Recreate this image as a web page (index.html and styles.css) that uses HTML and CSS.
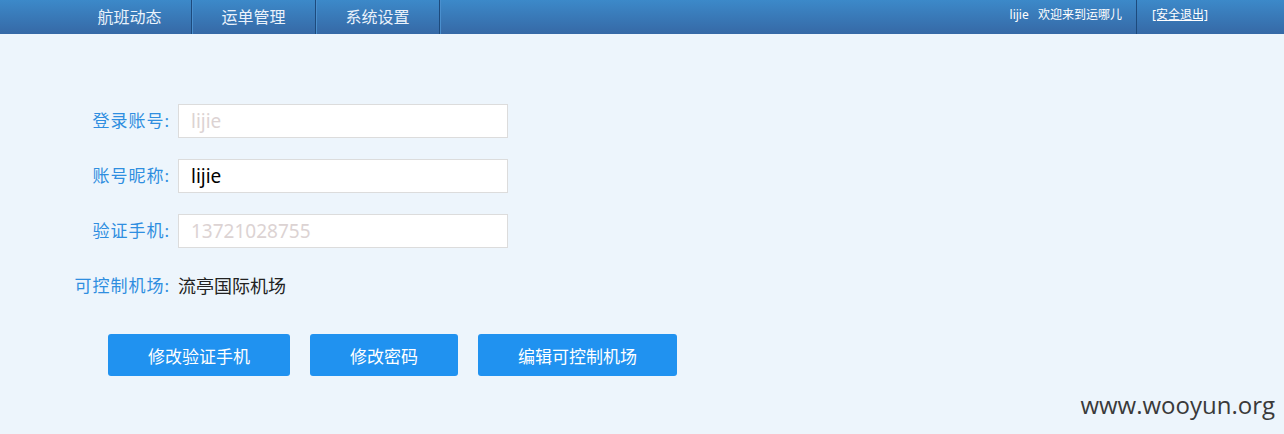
FILE: index.html
```html
<!DOCTYPE html>
<html lang="zh-CN">
<head>
  <meta charset="UTF-8" />
  <title>账号设置</title>
  <link rel="stylesheet" href="styles.css">
</head>

<body>
  <!-- 顶部导航 -->
  <div class="topbar">
    <ul class="nav">
      <li>航班动态</li>
      <li>运单管理</li>
      <li>系统设置</li>
    </ul>
    <div class="user">
      <span class="welcome">lijie&nbsp;&nbsp;&nbsp;欢迎来到运哪儿</span>
      <a class="logout" href="#">[安全退出]</a>
    </div>
  </div>

  <!-- 账号信息 -->
  <div class="content">
    <div class="form">
      <label>登录账号:</label>
      <input type="text" value="lijie" disabled>
      <label>账号昵称:</label>
      <input type="text" value="lijie">
      <label>验证手机:</label>
      <input type="text" value="13721028755" disabled>
      <label>可控制机场:</label>
      <div class="value">流亭国际机场</div>
    </div>

    <div class="actions">
      <button class="btn w1">修改验证手机</button>
      <button class="btn w2">修改密码</button>
      <button class="btn w3">编辑可控制机场</button>
    </div>
  </div>

  <div class="watermark">www.wooyun.org</div>
</body>
</html>
```

FILE: styles.css
```css
body {
  margin: 0;
  background: #edf5fc;
  font-family: "Noto Sans", "Noto Sans CJK SC", sans-serif;
  height: 434px;
  position: relative;
  overflow: hidden;
}

/* 顶部导航 */
.topbar {
  height: 34px;
  background: linear-gradient(#3c89c9, #3669a6);
  display: flex;
  justify-content: space-between;
  color: #fff;
}
.nav {
  display: flex;
  margin: 0;
  padding: 0 0 0 68px;
  list-style: none;
}
.nav li {
  width: 123px;
  line-height: 34px;
  text-align: center;
  font-size: 16px;
  color: #eaf2fb;
  border-right: 1px solid #1d4a7c;
  box-shadow: 1px 0 0 #4a8fce;
}
.user {
  display: flex;
  align-items: stretch;
  font-size: 12px;
  padding-right: 76px;
}
.welcome {
  line-height: 30px;
  padding-right: 14px;
  border-right: 1px solid #1d4a7c;
}
.logout {
  line-height: 30px;
  margin-left: 15px;
  color: #fff;
}

/* 表单 */
.content {
  padding-top: 70px;
}
.form {
  display: grid;
  grid-template-columns: 170px 330px;
  grid-auto-rows: 34px;
  column-gap: 8px;
  row-gap: 21px;
}
.form label {
  font-size: 17px;
  letter-spacing: 1px;
  color: #2f8ee0;
  text-align: right;
  line-height: 34px;
}
.form input {
  box-sizing: border-box;
  height: 34px;
  width: 330px;
  margin: 0;
  padding: 0 12px;
  border: 1px solid #dcdcdc;
  background: #fff;
  font-family: "Noto Sans", "Noto Sans CJK SC", sans-serif;
  font-size: 19px;
  color: #000;
  outline: none;
}
.form input:disabled {
  color: #dcd3d3;
}
.value {
  font-size: 18px;
  line-height: 34px;
  color: #222;
}

.actions {
  display: flex;
  gap: 20px;
  margin: 31px 0 0 108px;
}
.btn {
  height: 42px;
  border: none;
  border-radius: 3px;
  background: #2092f0;
  color: #fff;
  font-family: "Noto Sans", "Noto Sans CJK SC", sans-serif;
  font-size: 17px;
  padding: 0;
}
.w1 { width: 182px; }
.w2 { width: 148px; }
.w3 { width: 199px; }

/* 水印 */
.watermark {
  position: absolute;
  right: 9px;
  bottom: 13px;
  font-family: "Open Sans", sans-serif;
  font-size: 24px;
  color: #3a3a3a;
}
```
